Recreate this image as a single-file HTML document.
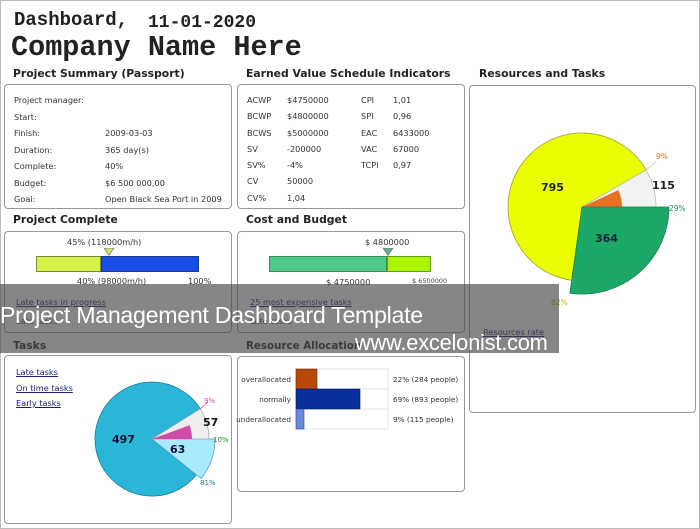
<!DOCTYPE html>
<html><head><meta charset="utf-8"><style>
*{margin:0;padding:0;box-sizing:border-box}
body{width:700px;height:529px;background:#fff;position:relative;overflow:hidden;font-family:"DejaVu Sans","Liberation Sans",sans-serif;color:#222}
.a{position:absolute;white-space:nowrap}
.box{position:absolute;border:1px solid #999;border-radius:4px;background:#fff}
.t{position:absolute;font-weight:bold;font-size:10.8px;color:#222;white-space:nowrap}
.s{font-size:8.2px;color:#333}
.lnk{font-size:8.2px;color:#1a1a7a;text-decoration:underline}
.mono{font-family:"Liberation Mono",monospace;font-weight:bold}
</style></head><body>
<div class="a" style="left:0;top:0;width:700px;height:529px;border:1px solid #bbb"></div>
<div class="a mono" style="left:14px;top:9px;font-size:19px">Dashboard,</div>
<div class="a mono" style="left:148px;top:13px;font-size:18px">11-01-2020</div>
<div class="a mono" style="left:11px;top:31px;font-size:28.5px">Company Name Here</div>

<div class="t" style="left:13px;top:67px">Project Summary (Passport)</div>
<div class="t" style="left:246px;top:67px">Earned Value Schedule Indicators</div>
<div class="t" style="left:479px;top:67px">Resources and Tasks</div>

<div class="box" style="left:4px;top:84px;width:228px;height:125px"></div>
<div class="a s" style="left:14px;top:92px;line-height:16.5px">Project manager:<br>Start:<br>Finish:<br>Duration:<br>Complete:<br>Budget:<br>Goal:</div>
<div class="a s" style="left:105px;top:92px;line-height:16.5px"><br><br>2009-03-03<br>365 day(s)<br>40%<br>$6 500 000,00<br>Open Black Sea Port in 2009</div>

<div class="box" style="left:237px;top:84px;width:228px;height:125px"></div>
<div class="a s" style="left:247px;top:92px;line-height:16.3px">ACWP<br>BCWP<br>BCWS<br>SV<br>SV%<br>CV<br>CV%</div>
<div class="a s" style="left:287px;top:92px;line-height:16.3px">$4750000<br>$4800000<br>$5000000<br>-200000<br>-4%<br>50000<br>1,04</div>
<div class="a s" style="left:361px;top:92px;line-height:16.3px">CPI<br>SPI<br>EAC<br>VAC<br>TCPI</div>
<div class="a s" style="left:393px;top:92px;line-height:16.3px">1,01<br>0,96<br>6433000<br>67000<br>0,97</div>

<div class="box" style="left:469px;top:85px;width:227px;height:328px"></div>

<div class="t" style="left:13px;top:213px">Project Complete</div>
<div class="t" style="left:246px;top:213px">Cost and Budget</div>
<div class="box" style="left:4px;top:231px;width:228px;height:102px"></div>
<div class="box" style="left:237px;top:231px;width:228px;height:102px"></div>
<div class="a s" style="left:67px;top:237px">45% (118000m/h)</div>
<div class="a" style="left:36px;top:256px;width:65px;height:16px;background:#d4f24a;border:1px solid #7a8a30"></div>
<div class="a" style="left:101px;top:256px;width:98px;height:16px;background:#1a4de8;border:1px solid #203a90"></div>
<svg class="a" style="left:104px;top:248px" width="11" height="8"><polygon points="0,0 10,0 5,7" fill="#d8e860" stroke="#888"/></svg>
<div class="a s" style="left:77px;top:276px">40% (98000m/h)</div>
<div class="a s" style="left:188px;top:276px">100%</div>
<div class="a lnk" style="left:16px;top:297px">Late tasks in progress</div>

<div class="a s" style="left:365px;top:237px">$ 4800000</div>
<div class="a" style="left:269px;top:256px;width:118px;height:16px;background:#4ec98a;border:1px solid #3a8a60"></div>
<div class="a" style="left:387px;top:256px;width:44px;height:16px;background:#aaf500;border:1px solid #6a9a10"></div>
<svg class="a" style="left:383px;top:248px" width="11" height="8"><polygon points="0,0 10,0 5,7" fill="#5ab890" stroke="#777"/></svg>
<div class="a s" style="left:326px;top:277px">$ 4750000</div>
<div class="a" style="left:412px;top:277px;font-size:6.5px;color:#444">$ 6500000</div>
<div class="a lnk" style="left:250px;top:297px">25 most expensive tasks</div>

<div class="t" style="left:13px;top:339px">Tasks</div>
<div class="t" style="left:246px;top:340px;font-size:10.3px">Resource Allocation</div>
<div class="box" style="left:4px;top:355px;width:228px;height:169px"></div>
<div class="box" style="left:237px;top:356px;width:228px;height:136px"></div>
<div class="a lnk" style="left:16px;top:365px;line-height:15.5px">Late tasks<br>On time tasks<br>Early tasks</div>

<svg class="a" style="left:0;top:0" width="700" height="529">
<path d="M152,439 L200.3,408.8 A57,57 0 1,0 196.3,474.9 Z" fill="#2ab6d8" stroke="#1a7a9a" stroke-width="0.8"/>
<path d="M152,439 L215,439 A63,63 0 0,1 201,478.6 Z" fill="#a8eaff" stroke="#5aa0c0" stroke-width="0.8"/>
<path d="M152,439 L200.3,408.8 A57,57 0 0,1 209,439 Z" fill="#eeeeee" stroke="#aaa" stroke-width="0.8"/>
<path d="M152,439 L189.6,425.3 A40,40 0 0,1 192,439 Z" fill="#d04aa8"/>
<line x1="200" y1="409" x2="208" y2="402" stroke="#d04aa8" stroke-width="0.8"/>
<text x="112" y="443" font-size="11" font-weight="bold" fill="#113" font-family="DejaVu Sans">497</text>
<text x="203" y="426" font-size="11" font-weight="bold" fill="#111" font-family="DejaVu Sans">57</text>
<text x="170" y="453" font-size="11" font-weight="bold" fill="#113" font-family="DejaVu Sans">63</text>
<text x="204" y="403" font-size="7" fill="#d04aa8" font-family="DejaVu Sans">9%</text>
<text x="213" y="442" font-size="7" fill="#2a8a2a" font-family="DejaVu Sans">10%</text>
<text x="200" y="485" font-size="7" fill="#2a7a8a" font-family="DejaVu Sans">81%</text>
<path d="M582,207 L646.1,170 A74,74 0 1,0 571.7,280.3 Z" fill="#eaff00" stroke="#a0a030" stroke-width="0.8"/>
<path d="M582,207 L646.1,170 A74,74 0 0,1 656,207 Z" fill="#f2f2f2" stroke="#bbb" stroke-width="0.8"/>
<path d="M582,207 L618.3,190.1 A40,40 0 0,1 622,207 Z" fill="#e87020"/>
<path d="M582,207 L669,207 A87,87 0 0,1 569.9,293.2 Z" fill="#1ea868" stroke="#178050" stroke-width="0.8"/>
<line x1="646" y1="170" x2="656" y2="162" stroke="#bbb" stroke-width="0.8"/>
<text x="541" y="191" font-size="11" font-weight="bold" fill="#222" font-family="DejaVu Sans">795</text>
<text x="652" y="189" font-size="11" font-weight="bold" fill="#222" font-family="DejaVu Sans">115</text>
<text x="595" y="242" font-size="11" font-weight="bold" fill="#123" font-family="DejaVu Sans">364</text>
<text x="656" y="159" font-size="7.5" fill="#e87020" font-family="DejaVu Sans">9%</text>
<text x="669" y="211" font-size="7.5" fill="#1e8858" font-family="DejaVu Sans">29%</text>
<text x="551" y="305" font-size="7.5" fill="#c8b000" font-family="DejaVu Sans">62%</text>
<rect x="296" y="369" width="92" height="60" fill="#fff" stroke="#e4e4e4"/>
<line x1="296" y1="389" x2="388" y2="389" stroke="#e4e4e4"/><line x1="296" y1="409" x2="388" y2="409" stroke="#e4e4e4"/>
<rect x="296" y="369" width="21" height="20" fill="#b8480a" stroke="#702800" stroke-width="0.6"/>
<rect x="296" y="389" width="64" height="20" fill="#0a2e9a" stroke="#061a60" stroke-width="0.6"/>
<rect x="296" y="409" width="8" height="20" fill="#6a8ae0" stroke="#304080" stroke-width="0.6"/>
<g font-size="7.3" fill="#333" font-family="DejaVu Sans">
<text x="291" y="382" text-anchor="end">overallocated</text>
<text x="291" y="402" text-anchor="end">normally</text>
<text x="291" y="422" text-anchor="end">underallocated</text>
<text x="393" y="382">22% (284 people)</text>
<text x="393" y="402">69% (893 people)</text>
<text x="393" y="422">9% (115 people)</text>
</g>
</svg>
<div class="a lnk" style="left:483px;top:327px">Resources rate</div>
<div class="a s" style="left:16px;top:316px">Late tasks</div>
<div class="a s" style="left:250px;top:316px">Late tasks</div>

<div class="a" style="left:0;top:284px;width:559px;height:69px;background:rgba(72,72,72,0.66)"></div>
<div class="a" style="left:0;top:302px;font-family:'Liberation Sans',sans-serif;font-size:23.2px;color:#fff;letter-spacing:-0.3px">Project Management Dashboard Template</div>
<div class="a" style="left:355px;top:330px;font-family:'Liberation Sans',sans-serif;font-size:21.8px;color:#fff;letter-spacing:-0.2px">www.excelonist.com</div>
</body></html>
